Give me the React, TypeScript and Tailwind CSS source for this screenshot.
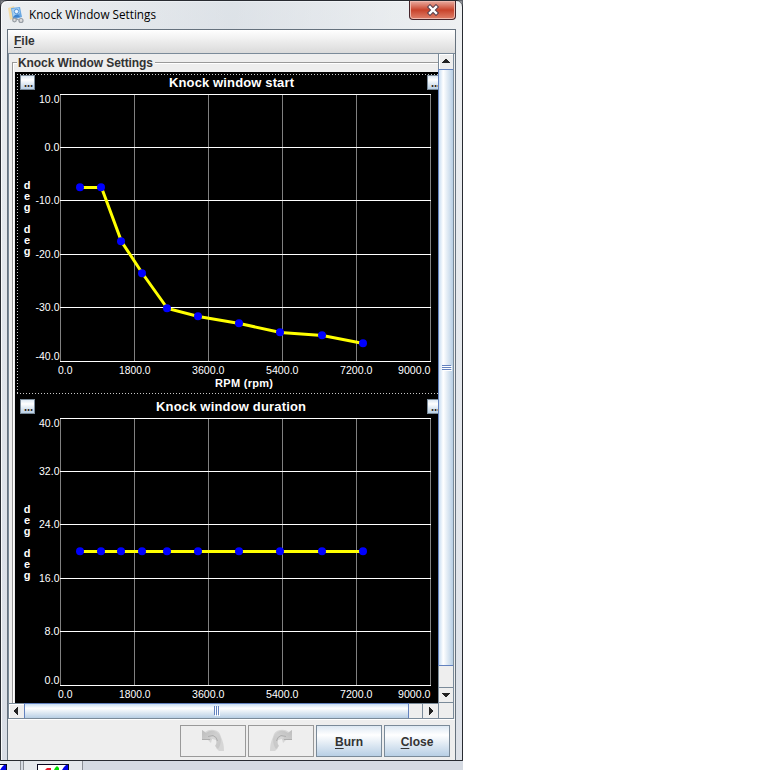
import React from 'react';

const X_TICKS = [
  { label: '0.0', x: 43, w: 14.5 },
  { label: '1800.0', x: 104, w: 31.5 },
  { label: '3600.0', x: 177, w: 32.5 },
  { label: '5400.0', x: 251, w: 32.5 },
  { label: '7200.0', x: 325, w: 32.5 },
  { label: '9000.0', x: 383, w: 32.5 },
];
const GRID_X = [45, 119, 193, 267, 341, 415];
const GRID_Y = [22, 75, 128, 182, 235, 289];
const LABEL_Y = [31, 79, 132, 186, 239, 288];
const POINT_X = [65, 86, 106, 127, 152, 183, 224, 265, 307, 348];

type ChartProps = {
  title: string;
  titleX: number;
  titleW: number;
  yLabels: string[];
  points: number[];
  focused?: boolean;
  xLabel?: string;
};

function Chart({ title, titleX, titleW, yLabels, points, focused, xLabel }: ChartProps) {
  return (
    <div className="relative h-[324px] w-[430px] shrink-0 bg-black">
      <svg width="430" height="324" className="block" fontFamily="'Liberation Sans', Arial, sans-serif">
        {focused && (
          <path d="M2.5 2V321M2 2.5H430M2 321.5H430" stroke="#c8c8c8" strokeDasharray="1 2" shapeRendering="crispEdges" fill="none" />
        )}
        <text x={titleX} y="15" textLength={titleW} fill="#fff" fontSize="13" fontWeight="bold">{title}</text>
        <g shapeRendering="crispEdges">
          {GRID_X.map((x) => <rect key={x} x={x} y="22" width="1" height="267" fill="#808080" />)}
          {GRID_Y.map((y) => <rect key={y} x="45" y={y} width="371" height="1" fill="#fff" />)}
        </g>
        <g fill="#fff" fontSize="10.5">
          {yLabels.map((t, i) => {
            const w = t.length === 3 ? 15 : t.length === 4 ? 20.5 : 24;
            return <text key={t} x={44.5 - w} y={LABEL_Y[i]} textLength={w} lengthAdjust="spacingAndGlyphs">{t}</text>;
          })}
          {X_TICKS.map((t) => <text key={t.label} x={t.x} y="302" textLength={t.w} lengthAdjust="spacingAndGlyphs">{t.label}</text>)}
        </g>
        <g fill="#fff" fontSize="11" fontWeight="bold" textAnchor="middle">
          {['d', 'e', 'g', '', 'd', 'e', 'g'].map((c, i) => <text key={i} x="12" y={117 + i * 11}>{c}</text>)}
        </g>
        {xLabel && <text x="200" y="315" textLength="58" fill="#fff" fontSize="11" fontWeight="bold">{xLabel}</text>}
        <polyline points={POINT_X.map((x, i) => `${x + 0.5},${points[i] + 0.5}`).join(' ')} fill="none" stroke="#ff0" strokeWidth="3" />
        {POINT_X.map((x, i) => <circle key={x} cx={x} cy={points[i] + 0.2} r="4" fill="#00f" />)}
      </svg>
      <Dots className="absolute left-[5px] top-[3px]" />
      <Dots className="absolute left-[412px] top-[3px]" />
    </div>
  );
}

function Dots({ className }: { className: string }) {
  return (
    <div className={`${className} flex h-[15px] w-[15px] items-end justify-end border border-[#7a8a99] bg-linear-to-b from-[#dde8f3] via-white via-30% to-[#b8cfe5] pb-[2px] pr-px`}>
      <svg width="9" height="2" shapeRendering="crispEdges"><path d="M1 0h1v2h-1zM4 0h1v2h-1zM7 0h1v2h-1z" fill="#333" /><path d="M0 0h1v2h-1zM3 0h1v2h-1zM6 0h1v2h-1z" fill="#c8a878" /><path d="M2 0h1v2h-1zM5 0h1v2h-1zM8 0h1v2h-1z" fill="#7799c8" /></svg>
    </div>
  );
}

function Arrow({ d }: { d: string }) {
  return <svg width="14" height="14" shapeRendering="crispEdges"><path d={d} fill="#222" /></svg>;
}

const BUTTON = 'flex h-8 w-[66px] items-center justify-center border';
const ACTIVE = `${BUTTON} border-[#7a8a99] bg-linear-to-b from-[#dde8f3] via-white via-30% to-[#b8cfe5] pt-[2px] text-[12px] font-bold text-[#333]`;

function CurvedArrow({ flip, id }: { flip?: boolean; id: string }) {
  return (
    <svg width="24" height="24" viewBox="0 0 24 24" className={flip ? '-scale-x-100' : ''}>
      <defs>
        <linearGradient id={id} x2="1" y2="1"><stop stopColor="#bdbdbd" /><stop offset=".5" stopColor="#cfcfcf" /><stop offset="1" stopColor="#c6c6c6" /></linearGradient>
      </defs>
      <path d="M1 1L4 3Q8 0 13 1Q19 2 20 8Q23 14 23 22H18L15 19Q17 15 15 11L11 10L10 14L7 11H1Z" fill="#d6d6d6" />
      <path d="M1 1L5 4Q9 1 13 2Q19 4 20 10Q20 16 17 20L14 17Q17 13 14 9Q12 7 9 8L11 11H1Z" fill={`url(#${id})`} />
      <path d="M1 10.5H9M7 7.5L12 6.5Q16 8 16.5 12" fill="none" stroke="#aeaeae" />
    </svg>
  );
}

function TitleBar() {
  return (
    <div className="relative flex h-[28px] shrink-0 items-center pl-[7px]">
      <svg width="16" height="18" viewBox="0 0 16 18">
        <path d="M0 2L6 0L8 12L2 14Z" fill="#f4dda9" />
        <path d="M3 2L12 1L14 11L5 14Z" fill="#6aa8e2" />
        <path d="M4 3L11 2L12 7L5 11Z" fill="#a3cff3" />
        <circle cx="8.5" cy="5.5" r="2.2" fill="#e9f5ff" stroke="#3b82ce" strokeWidth=".8" />
        <path d="M5 12Q6 8 10 8.5L12 11Z" fill="#3b82ce" />
        <g fill="#ddd" stroke="#979da4" strokeWidth="1.2"><circle cx="6.5" cy="14" r="1.8" /><circle cx="13" cy="14.5" r="2" /><path d="M8 13L11 14" /></g>
      </svg>
      <svg width="130" height="20" className="ml-[5px]"><text x="0" y="14" textLength="127" lengthAdjust="spacingAndGlyphs" fontFamily="'Open Sans', 'Noto Sans', sans-serif" fontSize="12">Knock Window Settings</text></svg>
      <div className="absolute left-[408px] top-0 flex h-[19px] w-[47px] items-center justify-center rounded-b-[4px] border border-t-0 border-[#45242a] bg-linear-to-b from-[#e8ab9f] via-[#c8422a] via-50% to-[#df806a] shadow-[inset_0_0_0_1px_#efb8ac]">
        <svg width="14" height="12" viewBox="0 0 14 12"><path d="M4 3L10 9M10 3L4 9" stroke="#58404d" strokeWidth="4.4" strokeLinecap="square" /><path d="M4 3L10 9M10 3L4 9" stroke="#fff" strokeWidth="2.4" strokeLinecap="square" /></svg>
      </div>
    </div>
  );
}

function ScrollArea() {
  return (
    <div className="grid h-[666px] grid-cols-[429px_16px] grid-rows-[649px_16px] border-l border-t border-[#7a8a99]">
      <div className="relative overflow-hidden bg-[#eee]">
        <div className="ml-[3px] mt-2 h-[700px] w-[440px] border border-[#999] shadow-[inset_1px_1px_0_#fff]">
          <div className="ml-[2px] mt-[9px] flex w-[430px] flex-col">
            <Chart focused title="Knock window start" titleX={154} titleW={125} yLabels={['10.0', '0.0', '-10.0', '-20.0', '-30.0', '-40.0']} points={[115, 115, 169, 201, 236, 244, 251, 260, 263, 271]} xLabel="RPM (rpm)" />
            <Chart title="Knock window duration" titleX={141} titleW={150} yLabels={['40.0', '32.0', '24.0', '16.0', '8.0', '0.0']} points={Array(10).fill(155)} />
          </div>
        </div>
        <div className="absolute left-2 top-[1px] h-[15px] w-[138px] bg-[#eee] pl-px"><svg width="137" height="15" className="block"><text x="0" y="12" textLength="135" fontFamily="'Liberation Sans', Arial, sans-serif" fontSize="12" fontWeight="bold" fill="#333">Knock Window Settings</text></svg></div>
      </div>
      <div className="flex flex-col border-x border-[#7a8a99]">
        <div className="h-[15px] bg-[#eee] shadow-[inset_1px_1px_0_#fff]"><Arrow d="M6 5h2v1h1v1h1v1h1v1H3V8h1V7h1V6h1z" /></div>
        <div className="-ml-px flex h-[597px] items-center justify-center border border-r-0 border-[#6382bf] bg-linear-to-r from-[#c8ddf2] via-white via-30% to-[#b8cfe5] pl-[2px]">
          <svg width="10" height="6" shapeRendering="crispEdges"><path d="M1 1h9v1H1zM1 3h9v1H1zM1 5h9v1H1z" fill="#fff" /><path d="M0 0h9v1H0zM0 2h9v1H0zM0 4h9v1H0z" fill="#6382bf" /></svg>
        </div>
        <div className="h-[21px] bg-[#eee]" />
        <div className="h-4 border-y border-[#7a8a99] bg-[#eee]"><Arrow d="M3 5h8v1h-1v1H9v1H8v1H6V8H5V7H4V6H3z" /></div>
      </div>
      <div className="flex border-y border-[#7a8a99]">
        <div className="w-[15px] shadow-[inset_1px_1px_0_#fff]"><Arrow d="M9 3v8H8v-1H7V9H6V8H5V6h1V5h1V4h1V3z" /></div>
        <div className="-mt-px flex h-[15px] w-[385px] items-center justify-center border-x border-t border-[#6382bf] bg-linear-to-b from-[#c8ddf2] via-white via-30% to-[#b8cfe5]">
          <svg width="6" height="10" shapeRendering="crispEdges"><path d="M1 1h1v9H1zM3 1h1v9H3zM5 1h1v9H5z" fill="#fff" /><path d="M0 0h1v9H0zM2 0h1v9H2zM4 0h1v9H4z" fill="#6382bf" /></svg>
        </div>
        <div className="w-[13px]" />
        <div className="w-4 border-l border-[#7a8a99] pl-px"><Arrow d="M5 3v8h1v-1h1V9h1V8h1V6H8V5H7V4H6V3z" /></div>
      </div>
      <div className="border border-t-0 border-[#7a8a99] bg-[#eee]" />
    </div>
  );
}

function Thumb({ wide }: { wide?: boolean }) {
  return (
    <svg width={wide ? 32 : 7} height="6" className="mt-[3px] block" viewBox={wide ? '0 0 32 6' : '25 0 7 6'}>
      <rect width="32" height="6" fill="#080820" /><rect x="1" y="1" width="30" height="5" fill="#fff" />
      <path d="M8 6L10 4H14V6Z" fill="#e21b2d" /><path d="M17 6L18 4L20 2L22 4V6Z" fill="#00dc00" /><path d="M25 6L27 3L29 1H31V6Z" fill="#0000e6" />
    </svg>
  );
}

export default function App() {
  return (
    <div className="h-[770px] w-[768px] overflow-hidden bg-white font-['Liberation_Sans',Arial,sans-serif]">
      <div className="w-[463px] bg-[#60646b]">
        <div className="flex h-[761px] w-[463px] flex-col rounded-t-[7px] border border-[#282b31] bg-linear-to-b from-[#e8ebed] via-[#dce1e7] via-30% to-[#cfd5df] shadow-[inset_1px_1px_0_#f8fafb]">
          <div className="flex h-full flex-col bg-linear-to-r from-white/20 via-[#ced6e0]/40 to-white/30">
            <TitleBar />
            <div className="ml-[6px] h-[732px] w-[449px] border-x border-t border-[#65717d] bg-[#eee]">
              <div className="flex h-[23px] items-center bg-linear-to-b from-white to-[#dadada] pb-[2px] pl-[6px] text-[12px] font-bold leading-none text-[#333]"><span><span className="underline underline-offset-2">F</span>ile</span></div>
              <ScrollArea />
              <div className="flex gap-[2px] border-t border-white pl-[172px] pt-[5px]">
                <div className={`${BUTTON} border-[#999]`}><CurvedArrow id="undo" /></div>
                <div className={`${BUTTON} border-[#999]`}><CurvedArrow id="redo" flip /></div>
                <button className={ACTIVE}><span><span className="underline underline-offset-2">B</span>urn</span></button>
                <button className={ACTIVE}><span><span className="underline underline-offset-2">C</span>lose</span></button>
              </div>
            </div>
          </div>
        </div>
      </div>
      <div className="flex h-[9px] w-[463px] overflow-hidden bg-[#d5dae2]">
        <div className="w-[21px] border-r border-[#8b8f95] bg-[#e5e8ec]"><Thumb /></div>
        <div className="ml-[2px] w-[60px] border-x border-[#8b8f95] bg-[#e5e8ec] pl-[13px]"><Thumb wide /></div>
      </div>
    </div>
  );
}
